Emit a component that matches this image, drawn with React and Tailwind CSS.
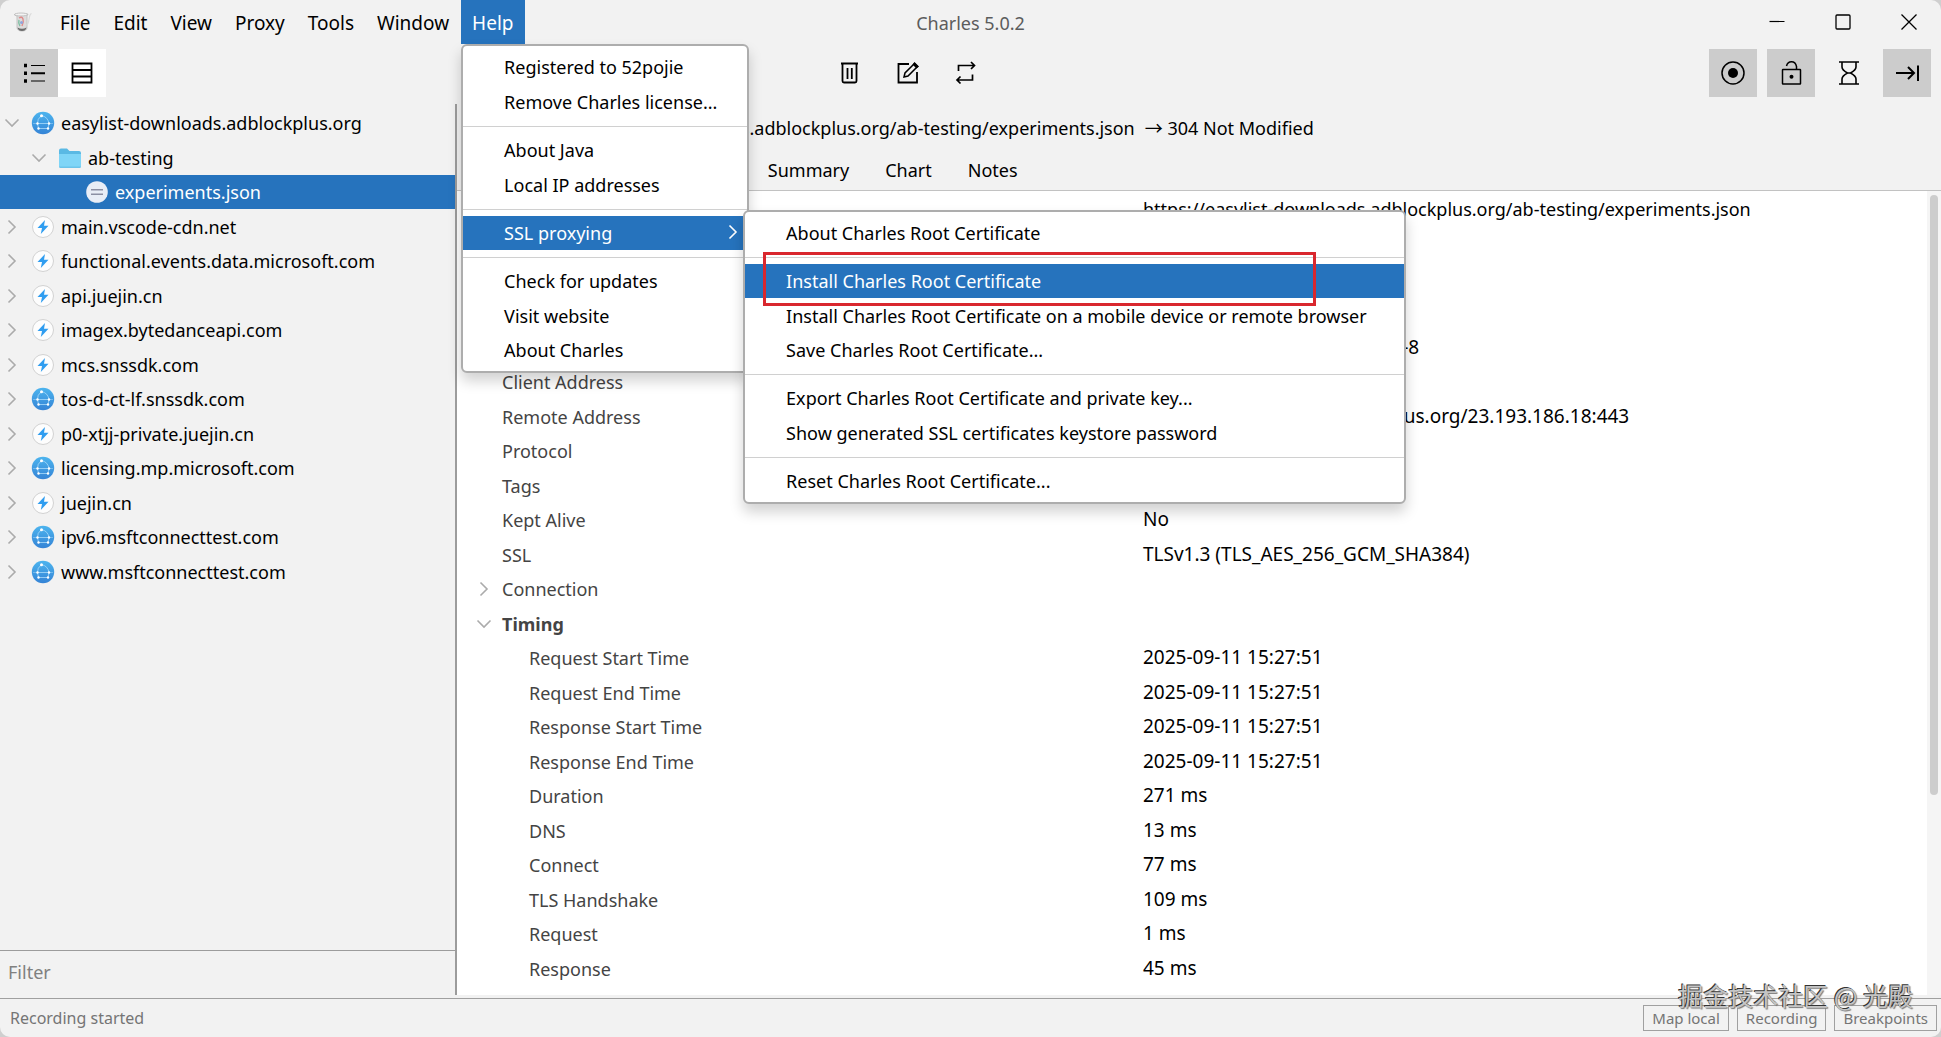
import { useState } from 'react';

const menus = ['File', 'Edit', 'View', 'Proxy', 'Tools', 'Window'];

const helpMenu = [
  ['Registered to 52pojie', 'Remove Charles license...'],
  ['About Java', 'Local IP addresses'],
  ['SSL proxying'],
  ['Check for updates', 'Visit website', 'About Charles'],
];

const sslMenu = [
  ['About Charles Root Certificate'],
  [
    'Install Charles Root Certificate',
    'Install Charles Root Certificate on a mobile device or remote browser',
    'Save Charles Root Certificate...',
  ],
  ['Export Charles Root Certificate and private key...', 'Show generated SSL certificates keystore password'],
  ['Reset Charles Root Certificate...'],
];

const tree = [
  { name: 'easylist-downloads.adblockplus.org', icon: 'globe', open: true },
  { name: 'ab-testing', icon: 'folder', open: true, level: 1 },
  { name: 'experiments.json', icon: 'file', level: 2 },
  { name: 'main.vscode-cdn.net', icon: 'bolt' },
  { name: 'functional.events.data.microsoft.com', icon: 'bolt' },
  { name: 'api.juejin.cn', icon: 'bolt' },
  { name: 'imagex.bytedanceapi.com', icon: 'bolt' },
  { name: 'mcs.snssdk.com', icon: 'bolt' },
  { name: 'tos-d-ct-lf.snssdk.com', icon: 'globe' },
  { name: 'p0-xtjj-private.juejin.cn', icon: 'bolt' },
  { name: 'licensing.mp.microsoft.com', icon: 'globe' },
  { name: 'juejin.cn', icon: 'bolt' },
  { name: 'ipv6.msftconnecttest.com', icon: 'globe' },
  { name: 'www.msftconnecttest.com', icon: 'globe' },
];

const overview = [
  { label: 'URL', value: 'https://easylist-downloads.adblockplus.org/ab-testing/experiments.json' },
  { label: 'Status', value: 'Complete' },
  { label: 'Response Code', value: '304 Not Modified' },
  { label: 'Method', value: 'GET' },
  { label: 'Content-Type', value: 'application/json;charset=UTF-8' },
  { label: 'Client Address', value: '127.0.0.1:52114' },
  { label: 'Remote Address', value: 'easylist-downloads.adblockplus.org/23.193.186.18:443' },
  { label: 'Protocol', value: 'HTTP/2.0' },
  { label: 'Tags', value: '-' },
  { label: 'Kept Alive', value: 'No' },
  { label: 'SSL', value: 'TLSv1.3 (TLS_AES_256_GCM_SHA384)' },
  { label: 'Connection', group: 'closed' },
  { label: 'Timing', group: 'open' },
  { label: 'Request Start Time', value: '2025-09-11 15:27:51', timing: true },
  { label: 'Request End Time', value: '2025-09-11 15:27:51', timing: true },
  { label: 'Response Start Time', value: '2025-09-11 15:27:51', timing: true },
  { label: 'Response End Time', value: '2025-09-11 15:27:51', timing: true },
  { label: 'Duration', value: '271 ms', timing: true },
  { label: 'DNS', value: '13 ms', timing: true },
  { label: 'Connect', value: '77 ms', timing: true },
  { label: 'TLS Handshake', value: '109 ms', timing: true },
  { label: 'Request', value: '1 ms', timing: true },
  { label: 'Response', value: '45 ms', timing: true },
];

const Svg = ({ size = 24, children, className = '', stroke = 2 }) => (
  <svg
    width={size}
    height={size}
    viewBox={`0 0 ${size} ${size}`}
    fill="none"
    stroke="currentColor"
    strokeWidth={stroke}
    className={`shrink-0 ${className}`}
    aria-hidden="true"
  >
    {children}
  </svg>
);

const Chevron = ({ open, className = 'text-[#ababab]' }) => (
  <Svg size={16} className={className} stroke={1.6}>
    <path d={open ? 'M1.5 4.5 8 11l6.5-6.5' : 'M4.5 1.5 11 8l-6.5 6.5'} />
  </Svg>
);

const Jug = () => (
  <svg width="22" height="22" viewBox="0 0 22 22" className="shrink-0" aria-hidden="true">
    <path d="M2 3.500 5 5v11q0 4 5 4t5-4V5l1-2Z" fill="#dcdcdc" stroke="#c4c4c4" strokeWidth="1" />
    <ellipse cx="9" cy="3.500" rx="6.500" ry="1.500" fill="#f3f3f3" stroke="#b8b8b8" strokeWidth="0.800" />
    <path d="M14.500 14c3.500-1 1.500-10.500 5-11.500" fill="none" stroke="#dadada" strokeWidth="1.200" />
    <path d="M7 7q3-2 4 1t-1 7" fill="none" stroke="#e08a8a" strokeWidth="1.400" />
    <path d="M7 9q-1 3 1 6" fill="none" stroke="#7fc0a4" strokeWidth="1.400" />
    <circle cx="9.500" cy="11.500" r="1.500" fill="#8fa6dd" />
    <path d="M5.500 16.500q4.500 2.500 9 0-.8 3.500-4.500 3.500t-4.500-3.500Z" fill="#6c6c6c" />
  </svg>
);

const NodeIcon = ({ type }) => {
  if (type === 'folder') {
    return (
      <svg width="24" height="22" viewBox="0 0 24 22" className="shrink-0" aria-hidden="true">
        <path d="M1 3.500Q1 1.500 3 1.500h6l2.500 2.500H21q2 0 2 2v13q0 1.500-1.500 1.500h-19Q1 20.500 1 19Z" fill="#5ab9e4" />
        <path d="M1 7h22v12q0 1.500-1.500 1.500h-19Q1 20.500 1 19Z" fill="#7fd5f7" />
        <path d="M1.500 20.200h21" stroke="#5bbce6" />
      </svg>
    );
  }
  if (type === 'file') {
    return (
      <svg width="24" height="24" viewBox="0 0 24 24" className="shrink-0" aria-hidden="true">
        <circle cx="12" cy="12" r="10.800" fill="#e8edf6" />
        <path d="M6 9.800h12M6 14.200h12" stroke="#8b8fa3" strokeWidth="1.500" />
      </svg>
    );
  }
  if (type === 'bolt') {
    return (
      <svg width="24" height="24" viewBox="0 0 24 24" className="shrink-0" aria-hidden="true">
        <circle cx="12" cy="12" r="10.500" fill="#fdfdfd" stroke="#d2d2d2" />
        <path d="M14 5 6.500 13H11l-1.200 6L17.500 10.800H13Z" fill="#2f9df0" />
      </svg>
    );
  }
  return (
    <svg width="24" height="24" viewBox="0 0 24 24" className="shrink-0" aria-hidden="true">
      <defs>
        <linearGradient id="globe" x1="0" y1="0" x2="0" y2="1">
          <stop offset="0" stopColor="#4cb4ee" />
          <stop offset="1" stopColor="#3584d6" />
        </linearGradient>
      </defs>
      <circle cx="12" cy="12" r="11.200" fill="url(#globe)" />
      <g stroke="#a9dafa" strokeWidth="0.800" fill="none">
        <path d="M10.500 4.500Q6 8 6.500 12.500M10.500 4.500Q17 6 18 12.500M6.500 12.500h11.500M7.500 17.500h9.500M6.500 12.500l1 5M18 12.500l-1 5" />
        <path d="M2 12.500h4M18 12.500h4" opacity="0.600" />
      </g>
      <g fill="#fff">
        <circle cx="10.500" cy="4.800" r="1.500" />
        <circle cx="6.500" cy="12.500" r="1.200" />
        <circle cx="18" cy="12.500" r="1.200" />
        <circle cx="7.500" cy="17.500" r="1.200" />
        <circle cx="17" cy="17.500" r="1.200" />
      </g>
    </svg>
  );
};

const ToolButton = ({ label, active, children }) => (
  <button
    type="button"
    aria-label={label}
    className={`flex size-12 items-center justify-center ${active ? 'bg-[#cccccc]' : ''}`}
  >
    {children}
  </button>
);

const Popup = ({ groups, active, className, renderActive }) => (
  <div
    role="menu"
    className={`absolute z-10 rounded-md border-2 border-[#adadad] bg-white py-1 text-lg text-black shadow-[0_8px_14px_rgba(0,0,0,0.18)] ${className}`}
  >
    {groups.map((group, i) => (
      <div key={group[0]}>
        {i > 0 && (
          <div className="flex h-3.5 items-center">
            <hr className="w-full border-[#d0d0d0]" />
          </div>
        )}
        <div>
          {group.map((item) => (
            <div key={item} className="relative h-[34px] even:h-[35px]">
              <button
                type="button"
                role="menuitem"
                className={`flex h-full w-full items-center pl-[41px] whitespace-nowrap ${
                  item === active ? 'bg-[#2673bd] text-white' : ''
                }`}
              >
                {item}
              </button>
              {item === active && renderActive}
            </div>
          ))}
        </div>
      </div>
    ))}
  </div>
);

const TitleBar = () => (
  <header className="relative flex h-11 shrink-0 items-stretch justify-between">
    <div className="flex gap-px text-[19px]">
      <div className="flex w-12 items-center pl-3">
        <Jug />
      </div>
      {menus.map((m) => (
        <button key={m} type="button" className="px-[11px] pt-0.5">
          {m}
        </button>
      ))}
      <div className="relative">
        <button type="button" className="h-full bg-[#2673bd] px-[11px] pt-0.5 text-white">
          Help
        </button>
        <Popup
          groups={helpMenu}
          active="SSL proxying"
          className="top-[44px] left-0 w-[288px]"
          renderActive={
            <>
              <Chevron className="absolute top-2 right-[6px] text-white" />
              <Popup
                groups={sslMenu}
                active="Install Charles Root Certificate"
                className="-top-[6px] left-[280px] w-[663px]"
                renderActive={
                  <div className="pointer-events-none absolute -top-3 -bottom-2 left-[18px] w-[553px] border-3 border-[#d9272e]" />
                }
              />
            </>
          }
        />
      </div>
    </div>
    <h1 className="absolute top-[9px] left-1/2 -translate-x-1/2 text-lg text-[#5c5c5c]">Charles 5.0.2</h1>
    <div className="flex items-center gap-[50px] pr-6">
      <button type="button" aria-label="Minimize">
        <Svg size={16} stroke={1.2}>
          <path d="M0.500 7.500h15" />
        </Svg>
      </button>
      <button type="button" aria-label="Maximize">
        <Svg size={16} stroke={1.3}>
          <rect x="1" y="1" width="14" height="14" rx="1" />
        </Svg>
      </button>
      <button type="button" aria-label="Close">
        <Svg size={16} stroke={1.3}>
          <path d="m0.500 0.500 15 15M15.500 0.500l-15 15" />
        </Svg>
      </button>
    </div>
  </header>
);

const Toolbar = () => (
  <div className="flex h-[60px] shrink-0 px-2.5 pt-[5px]">
    <div className="flex">
      <ToolButton label="Structure" active>
        <Svg>
          <path d="M9 4.500h14M9 20h14" stroke="#000" strokeWidth="1.200" />
          <path d="M9 12.200h14" strokeWidth="2" />
          <path d="M2 4.500h3M2 12.200h3M2 20h3" strokeWidth="3.500" />
        </Svg>
      </ToolButton>
      <button type="button" aria-label="Sequence" className="flex size-12 items-center justify-center bg-white">
        <Svg stroke={1.800}>
          <path d="M2.500 2.500h19v19h-19ZM2.500 9h19M2.500 15.500h19" />
        </Svg>
      </button>
    </div>
    <div className="flex flex-1 justify-center gap-2.5">
      <ToolButton label="Clear">
        <Svg stroke={1.800}>
          <path d="M3 2.500h17M4.500 2.500v17.500q0 1.500 1.500 1.500h11q1.500 0 1.500-1.500V2.500M9.500 7v11M13.800 7v11" />
        </Svg>
      </ToolButton>
      <ToolButton label="Edit">
        <Svg stroke={1.800}>
          <path d="M13 3H2.500v18.500H21V11" />
          <path d="m8 16 1-4L18.500 2.500l3 3L12 15Z" strokeWidth="1.500" />
          <path d="m16.500 3.500 2-2.500 4.500 4.500-2.500 2Z" fill="currentColor" stroke="none" />
        </Svg>
      </ToolButton>
      <ToolButton label="Repeat">
        <Svg stroke={1.700}>
          <path d="M4.500 10V4.500h15.500M17 1l3.500 3.500L17 8M18.500 13.500V19h-15M6.500 15.500 3 19l3.500 3.500" />
        </Svg>
      </ToolButton>
    </div>
    <div className="flex gap-2.5">
      <ToolButton label="Record" active>
        <Svg stroke={1.500}>
          <circle cx="12" cy="12" r="11" />
          <circle cx="12" cy="12" r="5" fill="currentColor" stroke="none" />
        </Svg>
      </ToolButton>
      <ToolButton label="SSL proxying" active>
        <Svg stroke={1.500}>
          <rect x="3.500" y="8.500" width="18" height="14.500" rx="0.500" />
          <path d="M7.500 5Q8.500.8 12.500.8t5 4.700v3" />
          <circle cx="12.500" cy="15.800" r="2" fill="currentColor" stroke="none" />
        </Svg>
      </ToolButton>
      <ToolButton label="Throttle">
        <Svg stroke={1.600}>
          <path d="M2 1h20M2 23h20M5 1v5q0 3 5.500 6Q5 15 5 18v5M19 1v5q0 3-5.500 6 5.500 3 5.500 6v5M10.500 12h3" />
        </Svg>
      </ToolButton>
      <ToolButton label="Breakpoints" active>
        <Svg>
          <path d="M1 12h18.500M13 6l6 6-6 6M23 4.500v15.500" />
        </Svg>
      </ToolButton>
    </div>
  </div>
);

const Sidebar = () => {
  const [selected, setSelected] = useState('experiments.json');
  const [filter, setFilter] = useState('');
  return (
    <aside className="flex w-[457px] shrink-0 flex-col border-r-2 border-[#9c9c9c]">
      <ul className="flex-1 pt-0.5 text-lg">
        {tree.map((n) => (
          <li key={n.name} className="h-[34px] even:h-[35px]">
            <button
              type="button"
              onClick={() => setSelected(n.name)}
              className={`flex h-full w-full items-center gap-1.5 ${
                n.level === 2 ? 'pl-[55px]' : n.level === 1 ? 'pl-[31px]' : 'pl-1'
              } ${n.name === selected ? 'bg-[#2673bd] text-white' : ''}`}
            >
              {n.level === 2 ? <span className="w-6" /> : <Chevron open={n.open} />}
              <span className={n.level === 2 ? '' : 'pl-[5px]'}>
                <NodeIcon type={n.icon} />
              </span>
              {n.name}
            </button>
          </li>
        ))}
      </ul>
      <input
        type="text"
        aria-label="Filter"
        placeholder="Filter"
        value={filter}
        onChange={(e) => setFilter(e.target.value)}
        className="h-[45px] border-t border-[#9c9c9c] px-2 pb-0.5 text-lg outline-none placeholder:text-[#808080]"
      />
    </aside>
  );
};

const Details = () => (
  <main className="flex min-w-0 flex-1 flex-col">
    <p className="flex h-12 items-center gap-2.5 pl-[70px] text-lg">
      <span>https://easylist-downloads.adblockplus.org/ab-testing/experiments.json</span>
      <span>→ 304 Not Modified</span>
    </p>
    <nav className="flex h-[39px] items-center border-b border-[#c2c2c2] pb-0.5 pl-[66px] text-lg">
      {['Overview', 'Contents', 'Summary', 'Chart', 'Notes'].map((t) => (
        <button key={t} type="button" className="px-[18px]">
          {t}
        </button>
      ))}
    </nav>
    <div className="flex min-h-0 flex-1 bg-white">
      <div className="min-w-0 flex-1 overflow-hidden">
        <table className="w-full table-fixed text-left text-lg">
          <tbody>
            {overview.map((r) => (
              <tr key={r.label} className="h-[35px] even:h-[34px]">
                <th
                  scope="row"
                  className={`w-7/15 p-0 pt-0.5 ${r.timing ? 'pl-[72px]' : r.group ? 'pl-[19px]' : 'pl-[45px]'} ${
                    r.group === 'open' ? 'font-bold' : 'font-normal'
                  } text-[#444]`}
                >
                  <span className="flex items-center gap-2.5">
                    {r.group && <Chevron open={r.group === 'open'} />}
                    {r.label}
                  </span>
                </th>
                <td className={`p-0 leading-7 whitespace-nowrap ${r.label === 'URL' ? '' : 'text-[19px]'}`}>
                  {r.value}
                </td>
              </tr>
            ))}
          </tbody>
        </table>
      </div>
      <div className="w-3.5 bg-[#f5f5f5] px-[3px] pt-1">
        <div className="h-3/4 rounded-full bg-[#cdcdcd]" />
      </div>
    </div>
  </main>
);

const StatusBar = () => (
  <footer className="relative flex h-[39px] shrink-0 items-center justify-between border-t border-[#a0a0a0] pr-1 pl-2.5 text-[#757575]">
    <span className="text-base">Recording started</span>
    <div className="flex gap-2 text-[15px]">
      {['Map local', 'Recording', 'Breakpoints'].map((s) => (
        <button key={s} type="button" className="h-[26px] border border-[#a0a0a0] px-2 leading-5">
          {s}
        </button>
      ))}
    </div>
    <div className="pointer-events-none absolute -top-[22px] right-7 font-['Noto_Sans_CJK_SC',sans-serif] text-[25px] text-[#c4c4c4] [text-shadow:-1px_-1px_0_#333,1px_1px_1px_#777]">
      掘金技术社区 @ 光殿
    </div>
  </footer>
);

export default function App() {
  return (
    <div className="bg-[#cfcfcf]">
      <div className="flex h-screen flex-col overflow-hidden rounded-[10px] bg-[#f2f2f2] font-['Noto_Sans','Noto_Sans_CJK_SC',sans-serif] text-black">
        <TitleBar />
        <Toolbar />
        <div className="mb-[3px] flex min-h-0 flex-1">
          <Sidebar />
          <Details />
        </div>
        <StatusBar />
      </div>
    </div>
  );
}
